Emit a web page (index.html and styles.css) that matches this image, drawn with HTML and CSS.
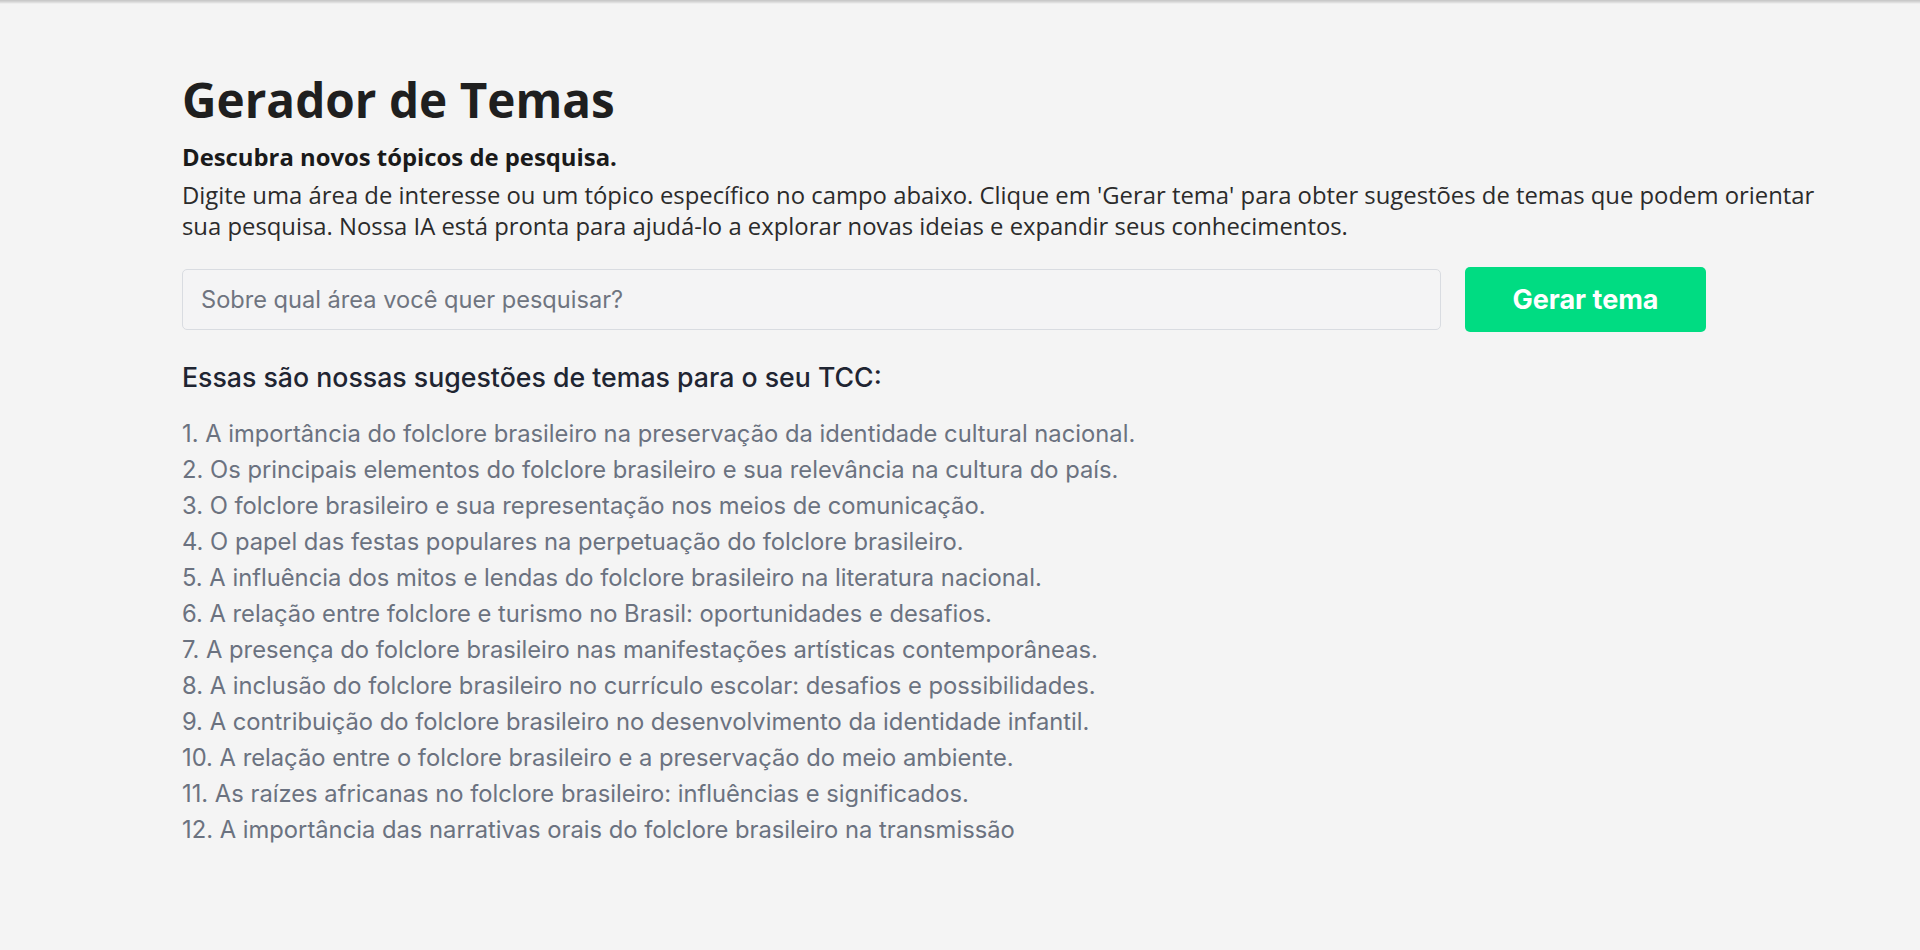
FILE: index.html
```html
<!DOCTYPE html>
<html lang="pt-BR">
<head>
<meta charset="utf-8">
<title>Gerador de Temas</title>
<link rel="stylesheet" href="styles.css">
</head>
<body>
<div class="topbar"></div>
<main class="container">
  <h1 class="title">Gerador de Temas</h1>
  <p class="subtitle">Descubra novos tópicos de pesquisa.</p>
  <p class="intro">Digite uma área de interesse ou um tópico específico no campo abaixo. Clique em 'Gerar tema' para obter sugestões de temas que podem orientar sua pesquisa. Nossa IA está pronta para ajudá-lo a explorar novas ideias e expandir seus conhecimentos.</p>
  <form class="search-row" onsubmit="return false">
    <input class="search-input" type="text" placeholder="Sobre qual área você quer pesquisar?">
    <button class="search-btn" type="submit">Gerar tema</button>
  </form>
  <h2 class="results-title">Essas são nossas sugestões de temas para o seu TCC:</h2>
  <div class="results">
    <p>1. A importância do folclore brasileiro na preservação da identidade cultural nacional.</p>
    <p>2. Os principais elementos do folclore brasileiro e sua relevância na cultura do país.</p>
    <p>3. O folclore brasileiro e sua representação nos meios de comunicação.</p>
    <p>4. O papel das festas populares na perpetuação do folclore brasileiro.</p>
    <p>5. A influência dos mitos e lendas do folclore brasileiro na literatura nacional.</p>
    <p>6. A relação entre folclore e turismo no Brasil: oportunidades e desafios.</p>
    <p>7. A presença do folclore brasileiro nas manifestações artísticas contemporâneas.</p>
    <p>8. A inclusão do folclore brasileiro no currículo escolar: desafios e possibilidades.</p>
    <p>9. A contribuição do folclore brasileiro no desenvolvimento da identidade infantil.</p>
    <p>10. A relação entre o folclore brasileiro e a preservação do meio ambiente.</p>
    <p>11. As raízes africanas no folclore brasileiro: influências e significados.</p>
    <p>12. A importância das narrativas orais do folclore brasileiro na transmissão</p>
  </div>
</main>
</body>
</html>
```

FILE: styles.css
```css
html, body {
  margin: 0;
  padding: 0;
  background: #f4f4f4;
}

body {
  font-family: "Open Sans", "Liberation Sans", sans-serif;
  color: #222222;
  min-height: 950px;
}

.topbar {
  height: 4px;
  background: linear-gradient(to bottom, #c4c4c4 0%, #d8d8d8 50%, #f4f4f4 100%);
}

.container {
  margin-left: 182px;
  width: 1650px;
  padding-top: 67px;
}

.title {
  margin: 0;
  font-family: "Open Sans", sans-serif;
  font-size: 47.7px;
  font-weight: 700;
  line-height: 1.2;
  color: #1f1f1f;
}

.subtitle {
  margin: 14px 0 0;
  font-size: 23.85px;
  font-weight: 700;
  line-height: 1.3;
  color: #1a1a1a;
}

.intro {
  margin: 7px 0 0;
  font-size: 23.85px;
  font-weight: 400;
  line-height: 1.3;
  color: #2b2b2b;
}

.search-row {
  display: flex;
  align-items: center;
  gap: 24px;
  margin-top: 25px;
}

.search-input {
  box-sizing: border-box;
  width: 1259px;
  height: 61px;
  padding: 0 18px;
  border: 1px solid #d9dce1;
  border-radius: 5px;
  background: #f4f4f5;
  font-family: Inter, "Liberation Sans", sans-serif;
  font-size: 23.6px;
  color: #374151;
  outline: none;
}

.search-input::placeholder {
  color: #6f7480;
}

.search-btn {
  box-sizing: border-box;
  width: 241px;
  height: 65px;
  border: none;
  border-radius: 5px;
  background: #00dc82;
  color: #ffffff;
  font-family: Inter, "Liberation Sans", sans-serif;
  font-size: 27px;
  font-weight: 700;
  cursor: pointer;
}

.results-title {
  margin: 27px 0 0;
  font-family: Inter, "Liberation Sans", sans-serif;
  font-size: 26.7px;
  font-weight: 500;
  line-height: 36px;
  color: #1f2532;
}

.results {
  margin-top: 21px;
  font-family: Inter, "Liberation Sans", sans-serif;
  font-size: 23.75px;
  line-height: 36px;
  color: #6b7280;
}

.results p {
  margin: 0;
}
```
